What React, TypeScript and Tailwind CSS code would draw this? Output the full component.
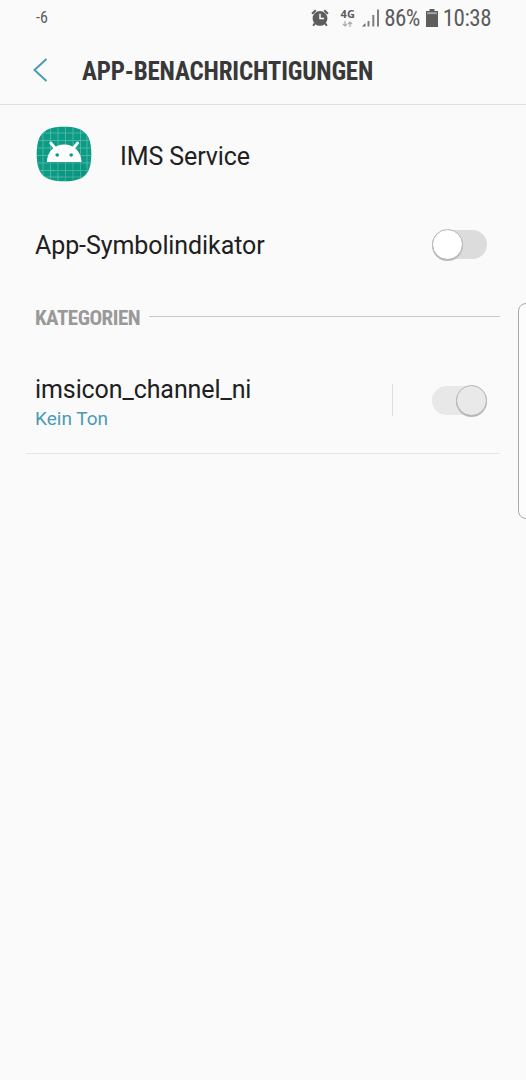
import React from 'react';
import clsx from 'clsx';

const GRID = [7, 14.5, 22, 29.5, 37, 44.5, 51];

const AlarmIcon = () => (
  <svg width="18" height="18" viewBox="0 0 18 18" className="shrink-0">
    <circle cx="9" cy="9.4" r="7.4" fill="#5c5c5c" />
    <path d="M1 4.8 4.8 1.2M17 4.8 13.2 1.2M3.8 14.4 2.2 16.8M14.2 14.4 15.8 16.8" stroke="#5c5c5c" strokeWidth="2" fill="none" />
    <path d="M9 4.8v4.8h4" stroke="#fafafa" strokeWidth="1.5" fill="none" />
  </svg>
);

const SignalIcon = () => (
  <svg width="19" height="18" viewBox="0 0 19 18" className="shrink-0">
    <path d="M1 17.5 4.5 14V17.5Z" fill="#666" />
    <path d="M7.5 17.5V12M12.3 17.5V6M17 17.5V.5" stroke="#7a7a7a" strokeWidth="1.9" />
  </svg>
);

const BatteryIcon = () => (
  <svg width="12" height="18" viewBox="0 0 12 18" className="shrink-0">
    <path d="M3.5 0h5v2H12v16H0V2h3.5Z" fill="#5e5e5e" />
    <path d="M1.2 3.2h9.6v2H1.2Z" fill="#a5a5a5" />
  </svg>
);

const AppIcon = () => (
  <svg width="56" height="56" viewBox="0 0 56 56" className="shrink-0">
    <defs>
      <clipPath id="squircle">
        <path d="M28 .7C48 .7 55.3 8 55.3 28S48 55.3 28 55.3.7 48 .7 28 8 .7 28 .7Z" />
      </clipPath>
    </defs>
    <g clipPath="url(#squircle)">
      <rect width="56" height="56" fill="#0c9c86" />
      {GRID.map((n) => (
        <path key={n} d={`M${n} 0V56M0 ${n}H56`} stroke="#59bdac" strokeWidth=".8" />
      ))}
      <path d="M11 36 31 56H56V46L45 36Z" fill="#00705f" opacity=".12" />
    </g>
    <path d="M10.8 36C11.4 25.5 18.5 18.5 28.2 18.5S45 25.5 45.6 36Z" fill="#fff" />
    <path d="m14.8 17 5 6M41.6 17l-5 6" stroke="#fff" strokeWidth="2.8" strokeLinecap="round" />
    <circle cx="21.2" cy="29" r="1.8" fill="#0c9c86" />
    <circle cx="35.2" cy="29" r="1.8" fill="#0c9c86" />
  </svg>
);

const Toggle = ({ on = false }: { on?: boolean }) => (
  <div className={clsx('flex h-[29px] w-[55px] shrink-0 items-center rounded-full', on ? 'justify-end bg-[#e8e8e8]' : 'bg-[#dcdcdc]')}>
    <div
      className={clsx(
        'size-[31px] shrink-0 rounded-full border border-[#b5b5b5] shadow-[0_1px_0_#b8b8b8]',
        on ? 'bg-[#e9e9e9]' : 'bg-white'
      )}
    />
  </div>
);

const App = () => {
  return (
    <div className="relative h-[1080px] w-[526px] overflow-hidden bg-[#fafafa] font-[Roboto,sans-serif] text-[#202020]">
      <div className="flex h-[36px] items-center pl-[36px] pr-[35px] text-[#5c5c5c] font-['Roboto_Condensed',Roboto,sans-serif] font-stretch-condensed">
        <span className="text-[16px]">-6</span>
        <div className="ml-auto flex items-center">
          <AlarmIcon />
          <div className="ml-[11px] flex w-[15px] flex-col items-center gap-[2px] pb-[2px]">
            <span className="font-['Open_Sans',sans-serif] text-[11px] font-bold leading-[11px] font-stretch-normal">4G</span>
            <svg width="11" height="6" viewBox="0 0 11 6">
              <path d="M3 0v5M1 3l2 2 2-2M8 6V1M6 3l2-2 2 2" stroke="#aaa" strokeWidth="1.2" fill="none" />
            </svg>
          </div>
          <div className="ml-[6px]"><SignalIcon /></div>
          <span className="ml-[4px] text-[23px] leading-none tracking-[-0.6px]">86%</span>
          <div className="ml-[6px]"><BatteryIcon /></div>
          <span className="ml-[5px] text-[23px] leading-none tracking-[-0.5px]">10:38</span>
        </div>
      </div>

      <header className="flex h-[69px] items-center border-b border-[#dedede] pl-[33px]">
        <svg width="15" height="24" viewBox="0 0 15 24" className="shrink-0">
          <path d="M13.5 1 1.5 12l12 11" stroke="#4b9bb3" strokeWidth="2" fill="none" />
        </svg>
        <h1 className="ml-[34px] pt-[2px] text-[25px] font-bold leading-none tracking-[-0.18px] text-[#383838] font-['Roboto_Condensed',Roboto,sans-serif] font-stretch-condensed">
          APP-BENACHRICHTIGUNGEN
        </h1>
      </header>

      <main>
        <div className="flex h-[98px] items-center pl-[36px]">
          <AppIcon />
          <span className="ml-[28px] pt-[6px] text-[25px] leading-[30px] tracking-[-0.09px]">IMS Service</span>
        </div>

        <div className="flex h-[83px] items-center justify-between pl-[35px] pr-[39px]">
          <span className="pt-[2px] text-[25px] leading-[30px] tracking-[-0.09px]">App-Symbolindikator</span>
          <Toggle />
        </div>

        <div className="flex h-[60px] items-center pl-[35px] pr-[26px]">
          <h2 className="pt-[4px] text-[21px] font-bold leading-none tracking-[-0.5px] text-[#999] font-['Roboto_Condensed',Roboto,sans-serif] font-stretch-condensed">
            KATEGORIEN
          </h2>
          <div className="ml-[9px] h-px flex-1 bg-[#c8c8c8]" />
        </div>

        <div className="ml-[26px] mr-[26px] flex h-[108px] items-center border-b border-[#e6e6e6] pl-[9px] pr-[13px]">
          <div className="pt-[8px]">
            <div className="text-[25px] leading-[30px] tracking-[-0.09px]">imsicon_channel_ni</div>
            <div className="text-[19px] leading-[28px] text-[#4b9bb3]">Kein Ton</div>
          </div>
          <div className="ml-auto mr-[39px] h-[32px] w-px bg-[#dedede]" />
          <div className="pt-[2px]">
            <Toggle on />
          </div>
        </div>
      </main>

      {/* edge panel handle */}
      <div className="absolute left-[518px] top-[303px] h-[216px] w-[16px] rounded-[9px] border border-[#aaa] bg-[#fcfcfc]" />
    </div>
  );
};

export default App;
